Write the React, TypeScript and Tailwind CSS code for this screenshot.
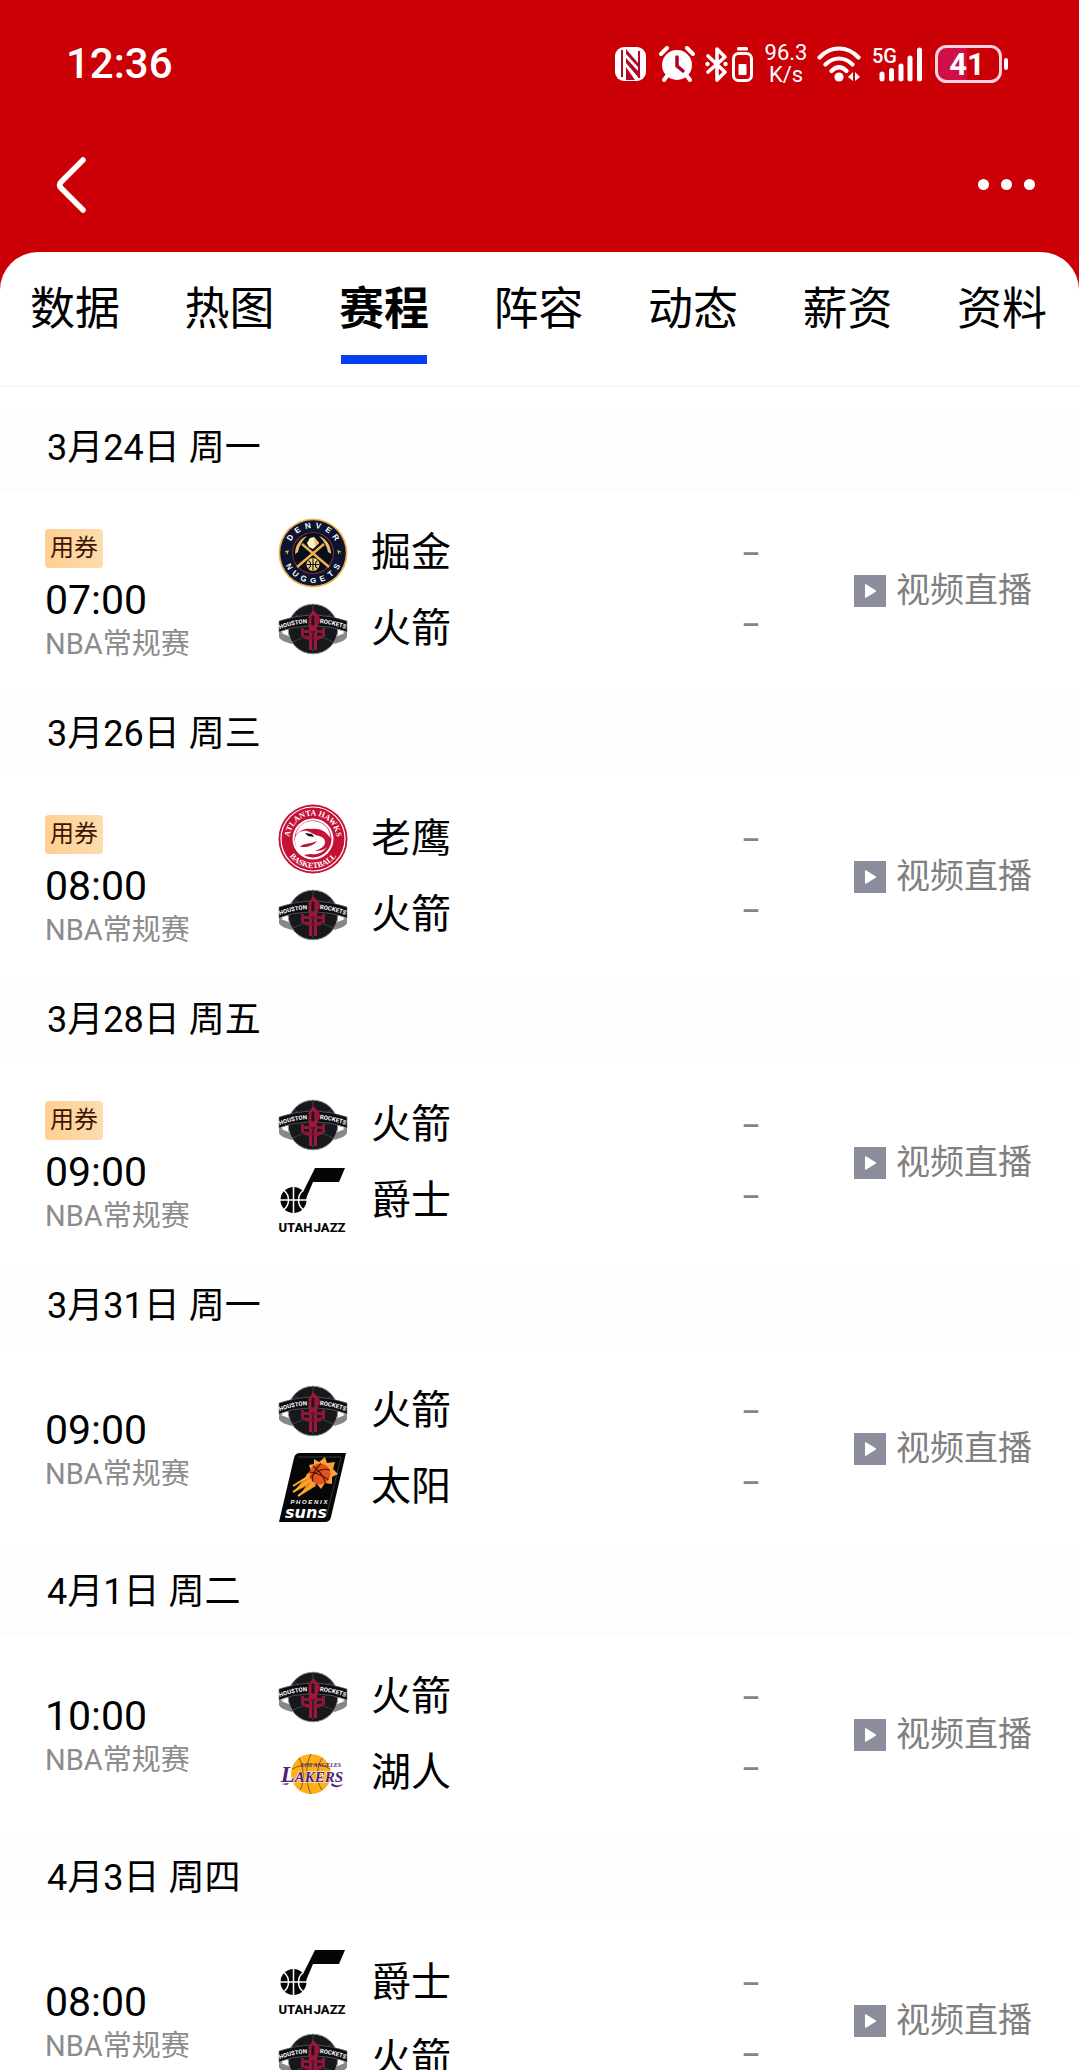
import React from 'react';

type TeamId = 'nuggets' | 'rockets' | 'hawks' | 'jazz' | 'suns' | 'lakers';

interface Game {
  date: string;
  time: string;
  coupon: boolean;
  teams: [TeamId, TeamId];
}

const TEAM_NAMES: Record<TeamId, string> = {
  nuggets: '掘金',
  rockets: '火箭',
  hawks: '老鹰',
  jazz: '爵士',
  suns: '太阳',
  lakers: '湖人',
};

const GAMES: Game[] = [
  { date: '3月24日 周一', time: '07:00', coupon: true, teams: ['nuggets', 'rockets'] },
  { date: '3月26日 周三', time: '08:00', coupon: true, teams: ['hawks', 'rockets'] },
  { date: '3月28日 周五', time: '09:00', coupon: true, teams: ['rockets', 'jazz'] },
  { date: '3月31日 周一', time: '09:00', coupon: false, teams: ['rockets', 'suns'] },
  { date: '4月1日 周二', time: '10:00', coupon: false, teams: ['rockets', 'lakers'] },
  { date: '4月3日 周四', time: '08:00', coupon: false, teams: ['jazz', 'rockets'] },
];

const TABS = ['数据', '热图', '赛程', '阵容', '动态', '薪资', '资料'];

function NuggetsLogo({ uid }: { uid: string }) {
  return (
    <svg viewBox="0 0 70 70" className="size-full" aria-hidden="true">
      <defs>
        <path id={`${uid}-top`} d="M10 35a25 25 0 0 1 50 0" />
        <path id={`${uid}-bottom`} d="M4 35a31 31 0 0 0 62 0" />
      </defs>
      <circle cx="35" cy="35" r="34.500" fill="#f0b24a" />
      <circle cx="35" cy="35" r="32.800" fill="#0b1430" />
      <circle cx="35" cy="35" r="20.500" fill="#080d1c" stroke="#7a2a36" strokeWidth="1.200" />
      <g fill="#fff" fontFamily="'Liberation Sans', sans-serif" fontWeight="700" fontSize="8">
        {[
          ['D', -56], ['E', -34], ['N', -11], ['V', 11], ['E', 34], ['R', 56],
        ].map(([letter, angle]) => (
          <text key={angle} x="35" y="10" textAnchor="middle" transform={`rotate(${angle} 35 35)`}>{letter}</text>
        ))}
        {[
          ['N', 60], ['U', 40], ['G', 20], ['G', 0], ['E', -20], ['T', -40], ['S', -60],
        ].map(([letter, angle]) => (
          <text key={angle} x="35" y="65" textAnchor="middle" transform={`rotate(${angle} 35 35)`}>{letter}</text>
        ))}
      </g>
      <path d="M7 34l3-1-1 3M63 34l-3-1 1 3" stroke="#f0b24a" strokeWidth="1.200" fill="none" />
      <path d="M19 49l27-23M51 49L24 26" stroke="#e9b64e" strokeWidth="2.400" />
      <path d="M17 36c0-8 4-15 12-18-5 5-8 10-9 16zM53 36c0-8-4-15-12-18 5 5 8 10 9 16z" fill="#e9c063" />
      <path d="M29 25l3-5 4-1 5 6-4 4-2 2-4-2z" fill="#fff3c4" />
      <path d="M36 19l5 6-4 4z" fill="#efc45c" />
      <circle cx="35" cy="46.500" r="6.500" fill="#f5d275" />
      <path d="M29 46.500h12M35 40.500v12M30.500 42.500c3 2 3 6 0 8M39.500 42.500c-3 2-3 6 0 8" stroke="#080d1c" strokeWidth="1.100" fill="none" />
    </svg>
  );
}

function RocketsLogo({ uid }: { uid: string }) {
  return (
    <svg viewBox="0 0 70 70" className="size-full" aria-hidden="true">
      <defs>
        <path id={`${uid}-left`} d="M1 35.500Q15 30 30 29" />
        <path id={`${uid}-right`} d="M40 29Q55 30 69 35.500" />
      </defs>
      <path d="M1 37l13 5v8C7 48 2 46 1 43zM69 37l-13 5v8c7-2 12-4 13-7z" fill="#85878b" />
      <path d="M3 39l10-2v6z" fill="#fff" />
      <path d="M67 39l-10-2v6z" fill="#fff" />
      <circle cx="35" cy="35" r="24.800" fill="#17181c" stroke="#8c8f94" strokeWidth="1" />
      <path d="M17 20c10 8 26 8 36 0M15 48c12-7 28-7 40 0M35 10v48" stroke="#3c3e43" strokeWidth="1" fill="none" />
      <path d="M1 27Q16 22 31 21v11Q15 32 1 38zM69 27Q54 22 39 21v11q15 0 30 6z" fill="#0b0c0f" stroke="#77797d" strokeWidth=".6" />
      <path d="M31 56V22l4-6 4 4v36h-3V36h-2v20z" fill="#9f1638" />
      <path d="M23 34v9h3v-4h18v4h3v-9h-3v2H26v-2zM25 44c6 3 14 3 20 0l-2-3c-5 2-11 2-16 0zM39 20c4 2 4 9 0 12z" fill="#8f1636" />
      <path d="M34 22h2v9h-2zM33 38h4M35 41v14" stroke="#25151c" strokeWidth="1" fill="#25151c" />
      <g fill="#fff" fontFamily="Roboto, sans-serif" fontWeight="700" fontSize="6">
        <text textAnchor="middle"><textPath href={`#${uid}-left`} startOffset="50%">HOUSTON</textPath></text>
        <text textAnchor="middle"><textPath href={`#${uid}-right`} startOffset="50%">ROCKETS</textPath></text>
      </g>
    </svg>
  );
}

function HawksLogo({ uid }: { uid: string }) {
  return (
    <svg viewBox="0 0 70 70" className="size-full" aria-hidden="true">
      <defs>
        <path id={`${uid}-top`} d="M11.500 35a23.500 23.500 0 0 1 47 0" />
        <path id={`${uid}-bottom`} d="M6 35a29 29 0 0 0 58 0" />
      </defs>
      <circle cx="35" cy="35" r="34.500" fill="#c41236" />
      <circle cx="35" cy="35" r="32" fill="none" stroke="#fff" strokeWidth="1.200" />
      <circle cx="35" cy="35" r="20.500" fill="#fff" />
      <circle cx="35" cy="35" r="18.500" fill="#c41236" />
      <path d="M17.500 31C21 18 33 14 43 19c6 3 9 8 9.500 15-5-7-11-10-19-9-7-1-12 2-16 6z" fill="#fff" />
      <path d="M17 36c0-6 5-10 12-9 4 1 7 4 12 5 4 1 6 3 6 6 0 5-5 7-10 9 5 0 9-1 12-4-4 6-10 8-16 7l-8 1c-5-3-8-8-8-15z" fill="#fff" />
      <path d="M22 43c3-4 10-3 17-6-3 4-9 6-13 6-2 0-3 0-4 0z" fill="#c41236" />
      <path d="M27 29l7 1 2 3-6-1z" fill="#28060e" />
      <g fill="#fff" fontFamily="'Liberation Serif', serif" fontWeight="700" fontSize="8">
        <text textAnchor="middle"><textPath href={`#${uid}-top`} startOffset="50%">ATLANTA HAWKS</textPath></text>
        <text textAnchor="middle"><textPath href={`#${uid}-bottom`} startOffset="50%">BASKETBALL</textPath></text>
      </g>
    </svg>
  );
}

function JazzLogo() {
  return (
    <svg viewBox="0 0 70 70" className="size-full" aria-hidden="true">
      <path d="M37 2h30l-6 14H35L27 35l-4-5z" fill="#050505" />
      <circle cx="15.500" cy="34" r="13" fill="#050505" />
      <path d="M2 34h27M15.500 21v26M6 24.500c6 5 6 14 0 19M25 24.500c-6 5-6 14 0 19" stroke="#fff" strokeWidth="1.500" fill="none" />
      <text x="34" y="66" textAnchor="middle" fontFamily="Roboto, sans-serif" fontWeight="800" fontSize="13" fill="#050505">
        UTAH<tspan dx="-2">{' JAZZ'}</tspan>
      </text>
    </svg>
  );
}

function SunsLogo() {
  return (
    <svg viewBox="0 0 70 70" className="size-full" aria-hidden="true">
      <path d="M22 1h46L53 65q-1 5-6 5H1L16 6q1-5 6-5z" fill="#060606" />
      <path d="M20 5h43L49 62" stroke="#3a3a3a" strokeWidth="1" fill="none" />
      <path d="M32 19L15 41l17-9zM34 26L20 45l18-11z" fill="#f08a20" />
      <path d="M31 24L15 34M32 28L15 40M36 32L20 44" stroke="#f9b233" strokeWidth="2" />
      <path d="M36 7l5 3 6-5 2 6 8-1-2 7 5 5-6 3v7l-7-1-4 6-4-5-7 2v-7l-4-4 5-4-2-6 5-1z" fill="#f9a03a" />
      <circle cx="42" cy="22" r="10.500" fill="#e2531d" />
      <path d="M32 26c7-8 14-10 20-8M35 14c6 4 12 12 12 17M43 11.500c-7 7-10 13-8 18M31.500 20c7 1 14 4 19 8" stroke="#4b1408" strokeWidth="1.100" fill="none" />
      <text x="31" y="52" textAnchor="middle" fontFamily="'Liberation Sans', sans-serif" fontWeight="700" fontStyle="italic" fontSize="6" fill="#fff">P H O E N I X</text>
      <text x="28" y="66" textAnchor="middle" fontFamily="'DejaVu Sans', sans-serif" fontWeight="700" fontStyle="italic" fontSize="16" fill="#fff">suns</text>
    </svg>
  );
}

function LakersLogo() {
  return (
    <svg viewBox="0 0 70 70" className="size-full" aria-hidden="true">
      <circle cx="33" cy="36" r="20" fill="#fdb01c" />
      <path d="M14 31c12-6 27-7 38 0M33 16c-6 12-6 28 0 40M21 20c5 10 6 24 1 32M44 20c-6 10-6 24 0 32" stroke="#8a5a12" strokeWidth="1" fill="none" />
      <path d="M3 46l8-1-2 2zM54 45c3 3 7 3 11 1-3 4-9 4-12 1z" fill="#4d2277" />
      <g fontFamily="'Liberation Serif', serif" fontWeight="700" fontStyle="italic" textAnchor="middle">
        <text x="43" y="29" fontSize="6" fill="#4d2277">LOS ANGELES</text>
        <text x="34" y="44" fontSize="15" fill="#4d2277" stroke="#fff" strokeWidth="1" paintOrder="stroke">
          <tspan fontSize="23">L</tspan>AKERS
        </text>
      </g>
    </svg>
  );
}

function TeamLogo({ team, uid }: { team: TeamId; uid: string }) {
  switch (team) {
    case 'nuggets':
      return <NuggetsLogo uid={uid} />;
    case 'rockets':
      return <RocketsLogo uid={uid} />;
    case 'hawks':
      return <HawksLogo uid={uid} />;
    case 'jazz':
      return <JazzLogo />;
    case 'suns':
      return <SunsLogo />;
    default:
      return <LakersLogo />;
  }
}

function StatusBar() {
  return (
    <div className="flex h-32 items-center justify-between pl-[66px] pr-[70px] text-white">
      <span className="text-[42px] leading-none font-medium">12:36</span>
      <div className="flex h-[38px] items-center">
        <svg viewBox="0 0 32 36" className="mr-3 h-9 w-8" aria-hidden="true">
          <rect x="0" y="1" width="31" height="34" rx="9" fill="#fff" />
          <path d="M7 4v27M24 5v27" stroke="#b0082a" strokeWidth="2" />
          <path d="M11 3l12 14v4L11 8zM11 12l12 13v6L11 17z" fill="#b0082a" />
          <path d="M11 21l9 13h-9z" fill="#b0082a" />
        </svg>
        <svg viewBox="0 0 36 36" className="mr-[10px] size-9" aria-hidden="true">
          <circle cx="18" cy="19" r="15" fill="#fff" />
          <path d="M2 8l6-6M34 8l-6-6M8 30l-3 4M28 30l3 4" stroke="#fff" strokeWidth="4" strokeLinecap="round" />
          <path d="M18 11v9l6 5" stroke="#b0002a" strokeWidth="3.500" fill="none" strokeLinecap="round" />
        </svg>
        <svg viewBox="0 0 48 38" className="mr-3 h-[38px] w-12" aria-hidden="true">
          <path d="M3 11l17 16-8 8V4l8 8L3 27" stroke="#fff" strokeWidth="3.600" fill="none" strokeLinejoin="round" strokeLinecap="round" />
          <circle cx="2.500" cy="19" r="2.200" fill="#fff" />
          <circle cx="20.500" cy="19" r="2.200" fill="#fff" />
          <rect x="28.500" y="8.500" width="18" height="27" rx="5" fill="none" stroke="#fff" strokeWidth="3" />
          <rect x="32" y="2" width="11" height="3.500" rx="1.500" fill="#fff" />
          <rect x="33.500" y="19" width="8" height="11" rx="1" fill="#fff" />
        </svg>
        <div className="mr-[10px] flex w-[42px] flex-col items-center text-[22px] leading-[22px]">
          <span>96.3</span>
          <span>K/s</span>
        </div>
        <svg viewBox="0 0 44 38" className="mr-3 h-[38px] w-11" aria-hidden="true">
          <path d="M2.500 12.500c11-12 28-12 39 0M8.500 19.500c8-8 19-8 27 0M14.500 26c5-5 10-5 15 0" stroke="#fff" strokeWidth="4.200" fill="none" strokeLinecap="round" />
          <circle cx="22" cy="32" r="4.600" fill="#fff" />
          <path d="M36 27v9l-5-4zM38 27v9l5-4z" fill="#fff" />
        </svg>
        <svg viewBox="0 0 50 38" className="mr-3 h-[38px] w-[50px]" aria-hidden="true">
          <text x="-1" y="18" fontFamily="Roboto, sans-serif" fontWeight="500" fontSize="20" fill="#fff">5G</text>
          <path d="M9 29v5M18.500 25.500v8.500M28 21v13M37 13v21M46.500 5v29" stroke="#fff" strokeWidth="5" strokeLinecap="round" />
        </svg>
        <svg viewBox="0 0 74 38" className="h-[38px] w-[74px]" aria-hidden="true">
          <path d="M12 2h20v34H12Q2 36 2 26V12Q2 2 12 2z" fill="#cf0f45" />
          <rect x="1.500" y="1.500" width="64" height="35" rx="10" fill="none" stroke="#ffd3dc" strokeWidth="3" />
          <rect x="69" y="13" width="4" height="12" rx="2" fill="#fff" />
          <text x="32" y="30" textAnchor="middle" fontFamily="Roboto, sans-serif" fontWeight="700" fontSize="31" fill="#fff">41</text>
        </svg>
      </div>
    </div>
  );
}

function TitleBar() {
  return (
    <div className="flex h-[124px] items-start justify-between pl-[50px] pr-[38px] pt-6">
      <button type="button" aria-label="返回" className="flex h-[66px] w-11 items-center justify-center">
        <svg viewBox="0 0 32 60" className="h-[60px] w-8" fill="none" aria-hidden="true">
          <path d="M27 5L5 27q-3 3 0 6l22 22" stroke="#fff" strokeWidth="5.500" strokeLinecap="round" strokeLinejoin="round" />
        </svg>
      </button>
      <button type="button" aria-label="更多" className="flex h-16 items-center gap-3 px-[6px]">
        <i className="size-[11px] rounded-full bg-white" />
        <i className="size-[11px] rounded-full bg-white" />
        <i className="size-[11px] rounded-full bg-white" />
      </button>
    </div>
  );
}

function TabBar() {
  const [active, setActive] = React.useState('赛程');
  return (
    <div role="tablist" className="flex h-[135px] shrink-0 items-start justify-between border-b-2 border-[#f8f8f8] pl-[30px] pr-8 pt-[25px]">
      {TABS.map((tab) => (
        <button
          key={tab}
          type="button"
          role="tab"
          aria-selected={tab === active}
          onClick={() => setActive(tab)}
          className={
            tab === active
              ? 'flex flex-col items-center text-[45px] leading-[66px] font-bold'
              : 'flex flex-col items-center text-[45px] leading-[66px]'
          }
        >
          {tab}
          {tab === active && <i className="mt-3 h-[9px] w-[86px] bg-[#0440f2]" />}
        </button>
      ))}
    </div>
  );
}

function GameSection({ game, index }: { game: Game; index: number }) {
  return (
    <section>
      <h2 className="flex h-[83px] items-center border-b border-[#fafafa] bg-[#fefefe] px-[47px] text-[36px]">{game.date}</h2>
      <div className="flex border-b border-[#fbfbfb] pl-[45px] pr-[47px]">
        <div className="flex w-[233px] flex-col items-start justify-center pt-1">
          {game.coupon && (
            <span className="mb-[17px] rounded-[4px] bg-linear-to-r from-[#ffcf92] to-[#fddcae] px-[5px] text-[24px] leading-[39px] text-[#3c1604]">
              用券
            </span>
          )}
          <time className="text-[41px] leading-[30px]">{game.time}</time>
          <span className="mt-[15px] text-[29px] leading-[28px] text-[#8c8c8c]">NBA常规赛</span>
        </div>
        <div className="flex flex-1 flex-col gap-[6px] pt-7 pb-7">
          {game.teams.map((team) => (
            <div key={team} className="flex h-[70px] items-center gap-[23px]">
              <div className="size-[70px]">
                <TeamLogo team={team} uid={`${team}-${index}`} />
              </div>
              <span className="text-[40px] leading-none">{TEAM_NAMES[team]}</span>
            </div>
          ))}
        </div>
        <div className="mr-[94px] flex flex-col justify-center pb-[2px] text-[29px] leading-[71px] font-medium text-[#858585]">
          <span>–</span>
          <span>–</span>
        </div>
        <a href="#live" className="flex items-center gap-[10px] text-[34px] text-[#808080]">
          <svg viewBox="0 0 32 32" className="size-8" aria-hidden="true">
            <path d="M0 0h32v32H0z" fill="#8b8d9c" />
            <path d="M11.500 9.500v13L22 16z" fill="#fff" stroke="#fff" strokeWidth="1" strokeLinejoin="round" />
          </svg>
          <span className="pb-[3px] leading-none">视频直播</span>
        </a>
      </div>
    </section>
  );
}

export default function App() {
  return (
    <main className="flex h-screen flex-col overflow-hidden bg-[#cb0006] font-[Roboto,'Noto_Sans_CJK_SC',sans-serif] text-black">
      <header>
        <StatusBar />
        <TitleBar />
      </header>
      <div className="flex min-h-0 flex-1 flex-col overflow-hidden rounded-t-[38px] bg-white">
        <TabBar />
        <div className="min-h-0 flex-1 overflow-y-auto pt-5 [scrollbar-width:none]">
          {GAMES.map((game, index) => (
            <GameSection key={game.date} game={game} index={index} />
          ))}
        </div>
      </div>
    </main>
  );
}
